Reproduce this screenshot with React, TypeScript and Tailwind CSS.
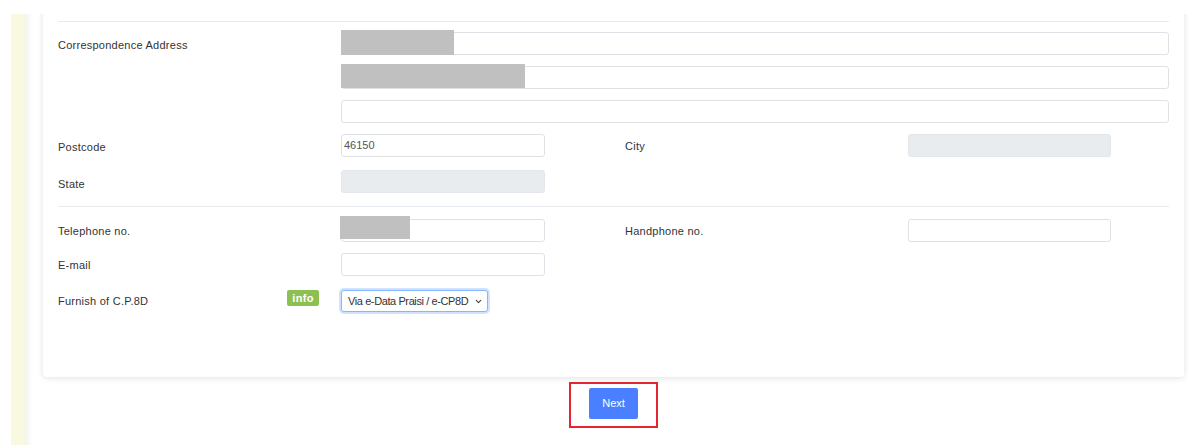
import { ChevronDown } from "lucide-react";

const font = { fontFamily: '"Liberation Sans", Arial, sans-serif' };

function Label({ children, className = "" }: { children: React.ReactNode; className?: string }) {
  return (
    <div className={`text-[11px] leading-[13px] tracking-[0.25px] text-[#333] ${className}`}>{children}</div>
  );
}

function Input({ value = "", disabled = false, className = "" }: { value?: string; disabled?: boolean; className?: string }) {
  return (
    <div
      className={`h-[23px] rounded-[3px] border px-[2px] flex items-center text-[11px] text-[#555] ${
        disabled ? "bg-[#e9ecef] border-[#e3e6ea]" : "bg-white border-[#dee2e6]"
      } ${className}`}
    >
      {value}
    </div>
  );
}

export default function App() {
  return (
    <div className="h-[445px] w-[1193px] overflow-hidden bg-white" style={font}>
      {/* top strip */}
      <div className="h-[14px] bg-white" />

      <div className="flex h-[431px] overflow-hidden">
        <div className="w-[11px] shrink-0" />
        {/* yellow side bar */}
        <div className="w-[14px] shrink-0 bg-[#f9f9e1]" />
        <div className="w-[8px] shrink-0 bg-gradient-to-r from-[#f2f2f2] to-white" />

        <div className="flex-1 pl-[10px] pr-[9px]">
          {/* card */}
          <div className="-mt-[20px] rounded-[4px] bg-white px-[15px] pt-[27px] pb-[65px] shadow-[0_1px_6px_rgba(0,0,0,0.12)]">
            <div className="border-t border-[#e9ecef]" />

            <div className="grid grid-cols-[283px_284px_283px_1fr] mt-[10px]">
              {/* Correspondence Address */}
              <Label className="pt-[7px]">Correspondence Address</Label>
              <div className="col-span-3 flex flex-col gap-[11px]">
                <div className="relative">
                  <Input />
                  <div className="absolute -top-[2px] left-0 h-[25px] w-[113px] bg-[#c0c0c0]" />
                </div>
                <div className="relative">
                  <Input />
                  <div className="absolute -top-[2px] left-0 h-[24px] w-[184px] bg-[#c0c0c0]" />
                </div>
                <Input />
              </div>

              {/* Postcode / City */}
              <Label className="mt-[11px] pt-[7px]">Postcode</Label>
              <div className="mt-[11px]">
                <Input value="46150" className="w-[204px]" />
              </div>
              <Label className="mt-[11px] pt-[6px]">City</Label>
              <div className="mt-[11px]">
                <Input disabled className="w-[203px]" />
              </div>

              {/* State */}
              <Label className="mt-[13px] pt-[8px]">State</Label>
              <div className="mt-[13px] col-span-3">
                <Input disabled className="w-[204px]" />
              </div>
            </div>

            <div className="mt-[13px] border-t border-[#e9ecef]" />

            <div className="grid grid-cols-[283px_284px_283px_1fr] mt-[12px]">
              {/* Telephone / Handphone */}
              <Label className="pt-[6px]">Telephone no.</Label>
              <div className="relative">
                <Input className="w-[204px] h-[22px]" />
                <div className="absolute -top-[3px] -left-[1px] h-[23px] w-[70px] bg-[#c0c0c0]" />
              </div>
              <Label className="pt-[6px]">Handphone no.</Label>
              <div>
                <Input className="w-[203px] h-[22px]" />
              </div>

              {/* E-mail */}
              <Label className="mt-[11px] pt-[6px]">E-mail</Label>
              <div className="mt-[11px] col-span-3">
                <Input className="w-[204px]" />
              </div>

              {/* Furnish of C.P.8D */}
              <div className="mt-[14px] flex items-start justify-between pr-[22px]">
                <Label className="pt-[5px]">Furnish of C.P.8D</Label>
                <span className="rounded-[2px] bg-[#8cc152] px-[5px] h-[16px] flex items-center text-[11px] font-bold tracking-[0.4px] text-white">
                  info
                </span>
              </div>
              <div className="mt-[14px] col-span-3">
                <div className="flex h-[22px] w-[147px] items-center justify-between whitespace-nowrap rounded-[3px] border border-[#86b7fe] bg-white pl-[6px] pr-[4px] text-[11px] tracking-[-0.4px] text-[#333] shadow-[0_0_0_2px_rgba(13,110,253,0.2)]">
                  <span>Via e-Data Praisi / e-CP8D</span>
                  <ChevronDown className="h-[9px] w-[9px] shrink-0 text-[#444]" strokeWidth={3} />
                </div>
              </div>
            </div>
          </div>

          {/* Next button */}
          <div className="mt-[5px] flex justify-center">
            <div className="border-2 border-[#e3262f] px-[18px] pt-[4px] pb-[7px]">
              <button className="h-[31px] w-[49px] rounded-[2px] bg-[#4a80ff] text-[11px] text-white">Next</button>
            </div>
          </div>
        </div>
      </div>
    </div>
  );
}
